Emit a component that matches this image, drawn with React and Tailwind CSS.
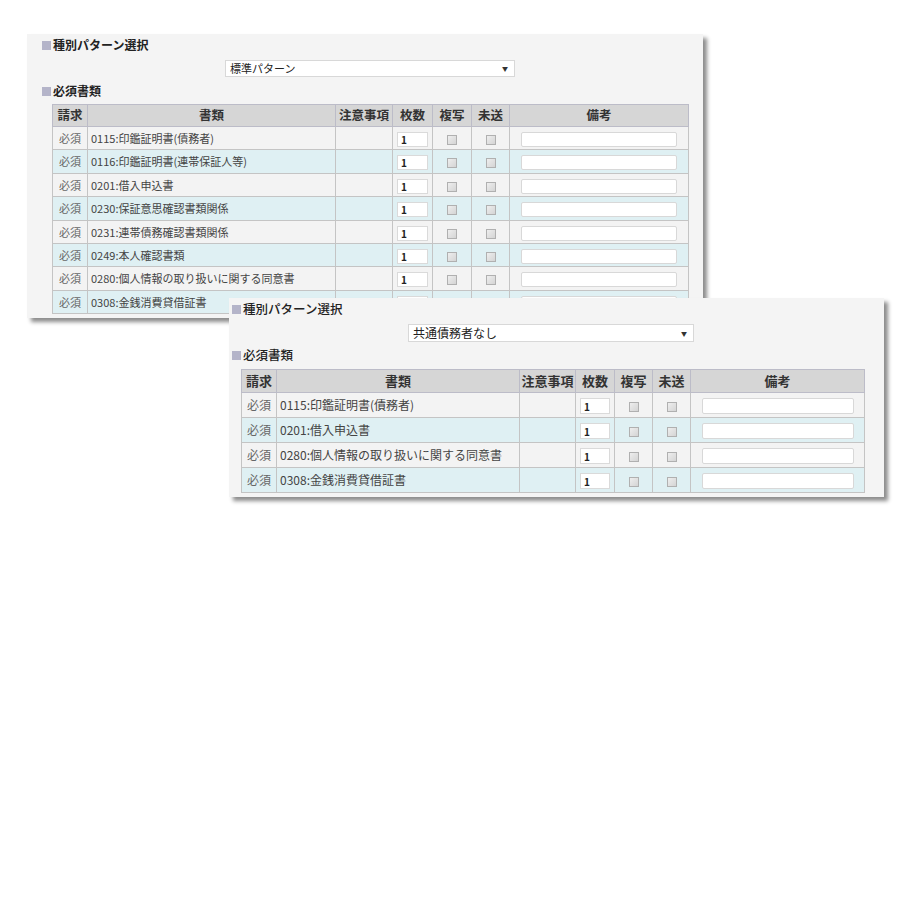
const font = { fontFamily: '"Noto Sans CJK JP", "Noto Sans", sans-serif' }

const docsA = [
  "0115:印鑑証明書(債務者)",
  "0116:印鑑証明書(連帯保証人等)",
  "0201:借入申込書",
  "0230:保証意思確認書類関係",
  "0231:連帯債務確認書類関係",
  "0249:本人確認書類",
  "0280:個人情報の取り扱いに関する同意書",
  "0308:金銭消費貸借証書",
]

const docsB = [
  "0115:印鑑証明書(債務者)",
  "0201:借入申込書",
  "0280:個人情報の取り扱いに関する同意書",
  "0308:金銭消費貸借証書",
]

function Bullet({ children, className }) {
  return (
    <div className={"flex items-center gap-[2px] text-[#222] " + className}>
      <span className="inline-block w-[9px] h-[9px] bg-[#b4b4c9]" />
      <span>{children}</span>
    </div>
  )
}

function Check() {
  return (
    <span className="inline-block w-[10px] h-[10px] border border-[#b0b0b0] bg-gradient-to-br from-[#eeeeee] to-[#d4d4d4] align-middle" />
  )
}

function Select({ value, className }) {
  return (
    <div className={"flex items-center justify-between bg-white border border-[#d8d8d8] pl-[4px] pr-[6px] text-[#222] " + className}>
      <span>{value}</span>
      <span className="text-[6px] text-[#333]">▼</span>
    </div>
  )
}

function DocTable({ docs, cols, headH, headText, rowH, text, numW, noteW, inputH }) {
  return (
    <table className={"table-fixed border-collapse w-full " + text}>
      <colgroup>
        {cols.map((w, i) => (
          <col key={i} style={{ width: w }} />
        ))}
      </colgroup>
      <thead>
        <tr className={"bg-[#d6d6d6] " + headH}>
          {["請求", "書類", "注意事項", "枚数", "複写", "未送", "備考"].map((h) => (
            <th key={h} className={"border border-[#bcbcc8] font-bold text-[#333] p-0 text-center whitespace-nowrap " + headText}>
              {h}
            </th>
          ))}
        </tr>
      </thead>
      <tbody>
        {docs.map((d, i) => (
          <tr key={d} className={(i % 2 ? "bg-[#dff0f3] " : "bg-[#f3f3f3] ") + rowH}>
            <td className="border border-[#c4c4c4] text-center text-[#666] p-0">必須</td>
            <td className="border border-[#c4c4c4] text-[#444] px-[3px] py-0 whitespace-nowrap overflow-hidden">{d}</td>
            <td className="border border-[#c4c4c4] p-0" />
            <td className="border border-[#c4c4c4] p-0 text-center">
              <div className={"inline-flex items-center bg-white border border-[#dadada] pl-[3px] font-bold text-[#222] text-[10px] align-middle " + numW + " " + inputH}>1</div>
            </td>
            <td className="border border-[#c4c4c4] p-0 text-center"><Check /></td>
            <td className="border border-[#c4c4c4] p-0 text-center"><Check /></td>
            <td className="border border-[#c4c4c4] p-0 text-center">
              <div className={"inline-block bg-white border border-[#d8d8d8] rounded-[2px] align-middle " + noteW + " " + inputH} />
            </td>
          </tr>
        ))}
      </tbody>
    </table>
  )
}

export default function App() {
  return (
    <div className="relative w-[900px] h-[900px] bg-white overflow-hidden" style={font}>
      <div className="absolute left-[27px] top-[34px] w-[676px] h-[284px] bg-[#f4f4f4] shadow-[4px_4px_4px_rgba(0,0,0,0.45)] overflow-hidden">
        <div className="flex flex-col pt-[3px]">
          <Bullet className="ml-[15px] h-[16px] text-[12px] font-bold">種別パターン選択</Bullet>
          <Select value="標準パターン" className="ml-[198px] mt-[7px] w-[290px] h-[17px] text-[11px]" />
          <Bullet className="ml-[15px] mt-[6px] h-[16px] text-[12px] font-bold">必須書類</Bullet>
          <div className="ml-[25px] mt-[5px] w-[636px]">
            <DocTable
              docs={docsA}
              cols={[35, 248, 57, 40, 39, 38, 179]}
              headH="h-[22px]"
              headText="text-[12.5px]"
              rowH="h-[23.4px]"
              text="text-[11px]"
              numW="w-[31px]"
              noteW="w-[156px]"
              inputH="h-[15px]"
            />
          </div>
        </div>
      </div>

      <div className="absolute left-[229px] top-[298px] w-[655px] h-[199px] bg-[#f4f4f4] shadow-[4px_4px_4px_rgba(0,0,0,0.45)] overflow-hidden">
        <div className="flex flex-col pt-[3px]">
          <Bullet className="ml-[3px] h-[17px] text-[12.5px] font-medium">種別パターン選択</Bullet>
          <Select value="共通債務者なし" className="ml-[179px] mt-[6px] w-[286px] h-[18px] text-[12px]" />
          <Bullet className="ml-[3px] mt-[5px] h-[17px] text-[12.5px] font-medium">必須書類</Bullet>
          <div className="ml-[12px] mt-[5px] w-[623px]">
            <DocTable
              docs={docsB}
              cols={[35, 243, 56, 39, 38, 38, 174]}
              headH="h-[23px]"
              headText="text-[13px]"
              rowH="h-[25px]"
              text="text-[12px]"
              numW="w-[30px]"
              noteW="w-[152px]"
              inputH="h-[16px]"
            />
          </div>
        </div>
      </div>
    </div>
  )
}
